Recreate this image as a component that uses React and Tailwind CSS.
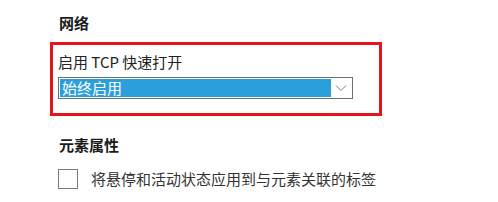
import React from 'react';

const font = { fontFamily: '"Microsoft YaHei", "Noto Sans CJK SC", "Noto Sans", sans-serif' };

const Chevron = () => (
  <svg width="12" height="8" viewBox="0 0 12 8" fill="none">
    <path d="M1 1.5 L6 6.5 L11 1.5" stroke="#7a7a7a" strokeWidth="1" />
  </svg>
);

export default function App() {
  return (
    <div className="w-[498px] h-[202px] bg-white pl-[50px] pt-[13px] text-[#1a1a1a]" style={font}>
      <div className="pl-[9px] text-[15px] font-bold leading-[20px]">网络</div>

      <div className="mt-[9px] w-[332px] h-[74px] border-[3px] border-[#e5141c] pl-[5px] pt-[7px]">
        <div className="text-[15px] leading-[20px] text-[#222]">启用 TCP 快速打开</div>
        <div className="mt-[5px] w-[295px] h-[22px] border border-[#6f6f6f] flex p-[1px]">
          <div className="flex-1 bg-[#2b9fd9] text-white text-[15px] leading-[18px] pl-[2px]">始终启用</div>
          <div className="w-[20px] flex items-center justify-center bg-white">
            <Chevron />
          </div>
        </div>
      </div>

      <div className="mt-[19px] pl-[9px] text-[15px] font-bold leading-[20px]">元素属性</div>

      <div className="mt-[14px] pl-[8px] flex items-center">
        <div className="w-[20px] h-[20px] border border-[#7a7a7a] bg-white" />
        <span className="ml-[13px] text-[15px] leading-[20px] text-[#333]">将悬停和活动状态应用到与元素关联的标签</span>
      </div>
    </div>
  );
}
